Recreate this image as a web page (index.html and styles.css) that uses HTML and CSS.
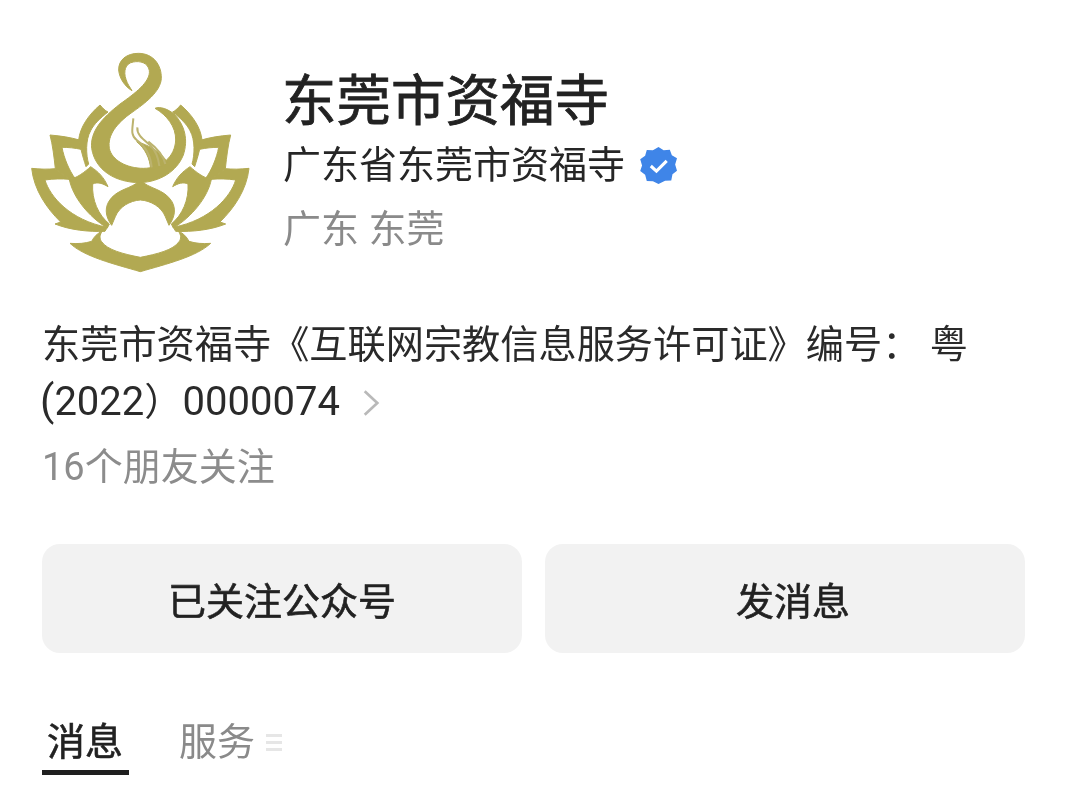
FILE: index.html
```html
<!DOCTYPE html>
<html lang="zh-CN">
<head>
<meta charset="utf-8">
<title>东莞市资福寺</title>
<link rel="stylesheet" href="styles.css">
</head>
<body>
<main class="page">
  <header class="head">
    <svg class="logo" viewBox="0 0 720 720" aria-hidden="true">
      <defs>
        <g id="half">
          <path class="gold" d="M35 385 C60 388 85 388 106 386 L148 418 C125 416 100 416 75 420 C90 470 150 540 262 562 L255 574 C205 576 150 570 105 552 L122 546 C80 505 42 450 35 385 Z"/>
          <path class="gold" d="M90 285 C125 288 150 292 178 300 L183 328 C165 324 145 322 126 322 C132 355 148 392 165 415 L148 418 L106 386 C102 350 98 315 90 285 Z"/>
          <path class="gold" d="M240 195 C205 225 180 262 176 300 L183 328 C188 348 192 362 198 380 L206 372 C198 345 196 300 212 272 C222 252 240 235 264 216 C255 212 248 204 240 195 Z"/>
          <path class="gold" d="M212 380 C235 395 252 412 264 440 C248 430 232 425 218 432 C215 480 235 525 268 552 L262 564 C205 530 158 470 148 418 C170 415 195 395 212 380 Z"/>
        </g>
      </defs>
      <use href="#half"/>
      <use href="#half" transform="translate(722 0) scale(-1 1)"/>
      <path class="gold" d="M361 420 C335 448 290 445 266 485 C252 510 260 535 275 556 L286 530 C298 500 330 482 361 480 C392 482 424 500 436 530 L447 556 C462 535 470 510 456 485 C432 445 387 448 361 420 Z"/>
      <path class="gold" d="M150 610 C175 612 195 610 215 604 C222 590 232 580 248 572 C238 585 238 596 245 605 C262 630 310 642 361 652 C412 642 460 630 477 605 C484 596 484 585 474 572 C490 580 500 590 507 604 C527 610 547 612 572 610 C530 650 440 672 361 695 C282 672 192 650 150 610 Z"/>
      <path class="gold" d="M405 205 C420 198 445 208 462 222 C495 255 505 300 490 345 C470 395 420 425 361 428 C285 428 225 390 215 325 C210 275 245 235 300 192 C345 160 392 125 388 92 C384 68 360 62 340 66 C315 70 310 95 318 118 C322 132 330 142 336 152 C315 140 298 115 296 90 C295 60 320 40 355 40 C400 40 425 75 424 115 C422 155 375 190 335 218 C290 250 262 285 268 325 C275 360 320 385 370 385 C425 385 465 350 467 300 C468 260 440 225 405 205 Z"/>
      <path class="gold" d="M392 388 C390 355 375 325 350 305 C385 315 425 335 442 368 C430 380 410 388 392 388 Z"/>
      <path class="feather" d="M340 235 C338 265 330 285 350 300 C375 318 392 345 395 382"/>
      <path class="feather" d="M352 262 C350 285 370 298 390 315 C405 330 415 350 418 378"/>
      <path class="feather" d="M385 305 C405 320 428 340 436 372"/>
    </svg>
    <div class="identity">
      <h1 class="name">东莞市资福寺</h1>
      <div class="org">
        <span>广东省东莞市资福寺</span>
        <svg class="badge" viewBox="0 0 36 36" aria-hidden="true">
          <path class="badge-bg" d="M18 0 L23 3.2 L29 2.6 L31 8 L36 11 L34.2 17 L36 23 L31.6 26.6 L30.4 32.6 L24.4 32.8 L18 36 L12.6 33.4 L6.6 33 L5 27 L0.2 23.4 L2 18 L0.2 12 L5 8.6 L6.6 3 L12.6 3.2 Z"/>
          <path class="badge-check" d="M10.5 18.5 L16 23.5 L26 13.5"/>
        </svg>
      </div>
      <div class="region">广东 东莞</div>
    </div>
  </header>

  <p class="desc">东莞市资福寺《互联网宗教信息服务许可证》编号： 粤<span class="code"><span class="paren">(</span><span class="num">2022</span>）<span class="num">0000074</span></span><svg class="chevron" viewBox="0 0 20 32" aria-hidden="true"><path d="M3 3 L17 16 L3 29"/></svg></p>
  <p class="friends">16个朋友关注</p>

  <div class="actions">
    <button class="btn" type="button">已关注公众号</button>
    <button class="btn btn-msg" type="button">发消息</button>
  </div>

  <nav class="tabs">
    <span class="tab tab-on">消息</span>
    <span class="tab tab-off">服务<i class="menu-icon"></i></span>
  </nav>
</main>
</body>
</html>
```

FILE: styles.css
```css
html, body {
  margin: 0;
  padding: 0;
  background: #fff;
}
.page {
  width: 1080px;
  height: 812px;
  box-sizing: border-box;
  overflow: hidden;
  padding: 40px 55px 0 42px;
  font-family: Roboto, "Noto Sans CJK SC", sans-serif;
  color: #232323;
  text-spacing-trim: trim-start;
  filter: blur(0.4px);
}
.head {
  display: flex;
  gap: 23px;
  margin-left: -22px;
}
.logo {
  width: 240px;
  height: 240px;
  flex: none;
  filter: blur(0.6px);
}
.gold {
  fill: #b2a952;
  stroke: #b2a952;
  stroke-width: 3;
}
.feather {
  fill: none;
  stroke: #bcb36e;
  stroke-width: 6;
}
.identity {
  padding-top: 27px;
}
.name {
  margin: 0 0 0 -1px;
  font-size: 54.5px;
  line-height: 69px;
  font-weight: 400;
  -webkit-text-stroke: 0.8px #222;
  color: #222;
}
.org {
  display: flex;
  align-items: center;
  gap: 15px;
  font-size: 38px;
  line-height: 58px;
  color: #262626;
}
.badge {
  width: 37px;
  height: 37px;
  flex: none;
}
.badge-bg { fill: #3f85e8; }
.badge-check {
  fill: none;
  stroke: #fff;
  stroke-width: 3;
}
.region {
  margin-top: 6px;
  font-size: 38px;
  line-height: 58px;
  color: #8a8a8a;
}
.desc {
  margin: 38px 0 0;
  font-size: 38.2px;
  line-height: 55px;
  color: #2a2a2a;
}
.code {
  white-space: nowrap;
}
.paren {
  font-size: 42px;
  margin-left: -2px;
}
.num {
  font-size: 40px;
}
.chevron {
  width: 18px;
  height: 30px;
  margin-left: 22px;
  vertical-align: -3px;
  fill: none;
  stroke: #b9b9b9;
  stroke-width: 3;
}
.friends {
  margin: 10px 0 0;
  font-size: 38px;
  line-height: 55px;
  color: #8c8c8c;
}
.actions {
  display: grid;
  grid-template-columns: 1fr 1fr;
  gap: 23px;
  margin-top: 49px;
}
.btn {
  height: 109px;
  border: 0;
  border-radius: 18px;
  background: #f2f2f2;
  font: 400 38px "Noto Sans CJK SC", sans-serif;
  -webkit-text-stroke: 0.6px #222;
  color: #222;
}
.btn-msg {
  padding-left: 22px;
}
.tabs {
  display: flex;
  gap: 50px;
  margin-top: 61px;
}
.tab {
  font-size: 38px;
  line-height: 56px;
}
.tab-on {
  padding: 0 6px 0 5px;
  border-bottom: 5px solid #1f1f1f;
  -webkit-text-stroke: 0.6px #222;
  color: #222;
}
.tab-off {
  display: flex;
  align-items: center;
  height: 56px;
  color: #8a8a8a;
}
.menu-icon {
  width: 16px;
  height: 17px;
  margin-left: 11px;
  background: linear-gradient(#e6e6e6 0 3px, transparent 3px 7px, #e6e6e6 7px 10px, transparent 10px 14px, #e6e6e6 14px 17px);
}
```
